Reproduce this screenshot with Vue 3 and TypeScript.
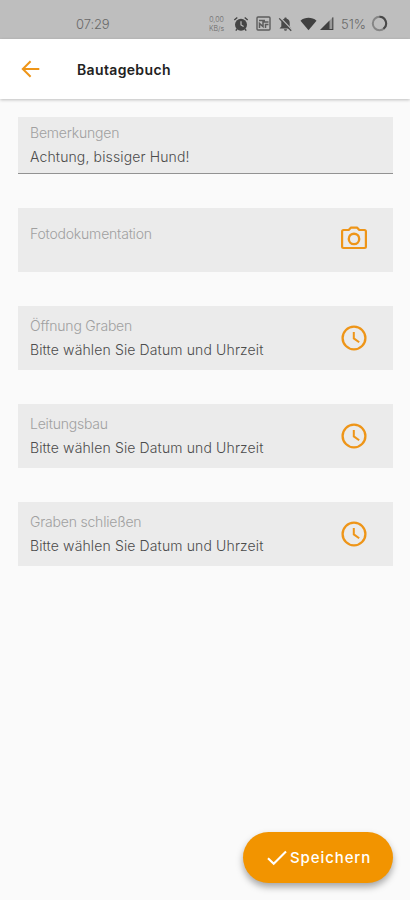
<script setup lang="ts">
interface Field {
  id: string
  label: string
  value?: string
  icon?: 'camera' | 'clock'
}

const placeholder = 'Bitte wählen Sie Datum und Uhrzeit'

const fields: Field[] = [
  { id: 'remarks', label: 'Bemerkungen', value: 'Achtung, bissiger Hund!' },
  { id: 'photos', label: 'Fotodokumentation', icon: 'camera' },
  { id: 'opening', label: 'Öffnung Graben', value: placeholder, icon: 'clock' },
  { id: 'piping', label: 'Leitungsbau', value: placeholder, icon: 'clock' },
  { id: 'closing', label: 'Graben schließen', value: placeholder, icon: 'clock' },
]
</script>

<template>
  <div class="screen">
    <div class="status">
      <span class="time">07:29</span>
      <div class="indicators">
        <span class="speed"><span>0,00</span><span>KB/s</span></span>
        <svg class="alarm" width="16" height="16" viewBox="0 0 16 16">
          <circle cx="8" cy="8.8" r="6" fill="#454545" />
          <path d="M1.3 4 4.3 1.5M14.7 4l-3-2.5M4 13l-1.2 1.6M12 13l1.2 1.6" stroke="#454545" stroke-width="1.4" />
          <path d="M8 5.2V9l2.6 1.5" fill="none" stroke="#bebebe" stroke-width="1.2" />
        </svg>
        <svg class="nfc" width="15" height="15" viewBox="0 0 15 15" fill="none" stroke="#5c5c5c">
          <rect x="1" y="1" width="13" height="13" rx="1" stroke-width="1.4" />
          <path d="M3 4.500h6M3.500 12V7.500l3.500 3V6h5.500M9.500 12V8.500h3" stroke-width="1.5" />
        </svg>
        <svg class="bell" width="15" height="16" viewBox="0 0 15 16">
          <path d="M7.5 1.5c.8 0 1.2.5 1.2 1.2 2 .6 3 2.1 3 4.2v3.6l1.8 1.9h-12l1.800-1.900V6.900c0-2.100 1-3.600 3-4.200 0-.7.4-1.200 1.200-1.200zM6 13.200h3a1.500 1.500 0 0 1-3 0z" fill="#4b4b4b" />
          <path d="m2.200 1.500 12 12.500" stroke="#bebebe" stroke-width="1.100" />
          <path d="m1.200 2.400 12 12.300" stroke="#4b4b4b" stroke-width="1.300" />
        </svg>
        <svg class="wifi" width="17" height="14" viewBox="0 0 17 14"><path d="M.5 3.700C5-.1 12-.1 16.500 3.700L8.500 13.300z" fill="#404040" /></svg>
        <svg class="signal" width="15" height="15" viewBox="0 0 15 15">
          <path d="M14.300.8V14H1z" fill="#999" />
          <path d="M10.500 4.500V14H1zM13.300 1.600h1V14h-1zM10 13h4v1h-4z" fill="#404040" />
        </svg>
        <span class="percent">51%</span>
        <svg class="battery" width="17" height="17" viewBox="0 0 17 17" fill="none" stroke-width="2">
          <circle cx="8.500" cy="8.500" r="6.700" stroke="#858585" />
          <path d="M8.500 1.800a6.700 6.700 0 0 1 4 12" stroke="#484848" />
        </svg>
      </div>
    </div>

    <header class="bar">
      <svg class="back" width="20" height="18" viewBox="0 0 20 18" fill="none" stroke="#ee9518" stroke-width="2">
        <path d="M18.300 9H2M9.600 1.200 1.800 9l7.800 7.800" />
      </svg>
      <h1>Bautagebuch</h1>
    </header>

    <main class="form">
      <section v-for="f in fields" :key="f.id" class="field" :class="[f.id, { single: !f.value }]">
        <div class="texts">
          <span class="label">{{ f.label }}</span>
          <span v-if="f.value" class="value">{{ f.value }}</span>
        </div>
        <svg v-if="f.icon === 'camera'" class="icon" width="28" height="28" viewBox="0 0 28 28" fill="none" stroke="#ee9518" stroke-width="2.200">
          <path d="M3.500 6h5.200l2.100-2.300h6.400L19.300 6h5.200q1.400 0 1.400 1.400v15.200q0 1.400-1.400 1.400h-21q-1.400 0-1.400-1.400V7.400Q2.100 6 3.500 6z" stroke-linejoin="round" />
          <circle cx="14" cy="14.900" r="5.200" stroke-width="2.400" />
        </svg>
        <svg v-else-if="f.icon === 'clock'" class="icon" width="28" height="28" viewBox="0 0 28 28" fill="none" stroke="#ee9518" stroke-width="2.300">
          <circle cx="14" cy="14" r="11.400" />
          <path d="M13.800 8v6.400l5.400 3.800" stroke-width="2" />
        </svg>
      </section>
    </main>

    <button class="save" type="button">
      <svg width="22" height="18" viewBox="0 0 22 18" fill="none" stroke="#fff" stroke-width="2.100"><path d="m2 9.300 5.700 5.500L20 2.500" /></svg>
      <span>Speichern</span>
    </button>
  </div>
</template>

<style>
body {
  margin: 0;
  background: #fafafa;
}
</style>

<style scoped>
.screen {
  display: flex;
  flex-direction: column;
  box-sizing: border-box;
  width: 410px;
  height: 900px;
  overflow: hidden;
  background: #fafafa;
  font-family: Inter, "Liberation Sans", sans-serif;
  font-weight: 300;
}
.status {
  display: flex;
  flex: none;
  justify-content: space-between;
  align-items: center;
  box-sizing: border-box;
  height: 39px;
  padding: 8px 22px 0 76px;
  background: #bebebe;
  color: #686868;
}
.time {
  font-size: 13px;
  letter-spacing: -0.1px;
}
.indicators {
  display: flex;
  align-items: center;
}
.speed {
  display: flex;
  flex-direction: column;
  align-items: center;
  width: 19px;
  font-size: 7px;
  line-height: 9px;
}
.alarm { margin-left: 7px; }
.nfc { margin-left: 7px; }
.bell { margin-left: 7px; }
.wifi { margin-left: 7px; }
.signal { margin-left: 2px; }
.percent {
  width: 27px;
  margin-left: 7px;
  font-size: 13px;
  white-space: nowrap;
}
.battery { margin-left: 3px; }
.bar {
  display: flex;
  flex: none;
  align-items: center;
  height: 60px;
  padding-left: 21px;
  background: #fff;
  box-shadow: 0 1px 3px rgba(0, 0, 0, 0.24);
}
h1 {
  margin: 0 0 0 36px;
  color: #222;
  font-size: 14px;
  font-weight: 600;
  letter-spacing: 0.35px;
}
.form {
  display: flex;
  flex-direction: column;
  gap: 34px;
  padding: 18px 17px 0 18px;
}
.field {
  display: flex;
  justify-content: space-between;
  box-sizing: border-box;
  height: 64px;
  padding: 8px 25px 0 12px;
  background: #ebebeb;
}
.remarks {
  height: 57px;
  padding-top: 4px;
  border-bottom: 1px solid #929292;
}
.texts {
  display: flex;
  flex-direction: column;
}
.label,
.value {
  font-size: 14px;
  line-height: 24px;
  white-space: nowrap;
}
.label {
  color: #a0a0a0;
  letter-spacing: -0.2px;
}
.value {
  color: #4c4c4c;
  letter-spacing: 0.13px;
}
.single .label { margin-top: 6px; }
.icon { margin-top: 10px; }
.single .icon { margin-top: 8px; }
.save {
  display: flex;
  align-items: center;
  align-self: flex-end;
  box-sizing: border-box;
  width: 150px;
  height: 51px;
  margin: auto 17px 17px 0;
  padding: 0 0 0 23px;
  border: 0;
  border-radius: 26px;
  background: #f29400;
  box-shadow: 0 4px 7px rgba(0, 0, 0, 0.34);
  color: #fff;
  font: 500 15px Inter, "Liberation Sans", sans-serif;
  letter-spacing: 0.9px;
}
.save span { margin-left: 2px; }
</style>
